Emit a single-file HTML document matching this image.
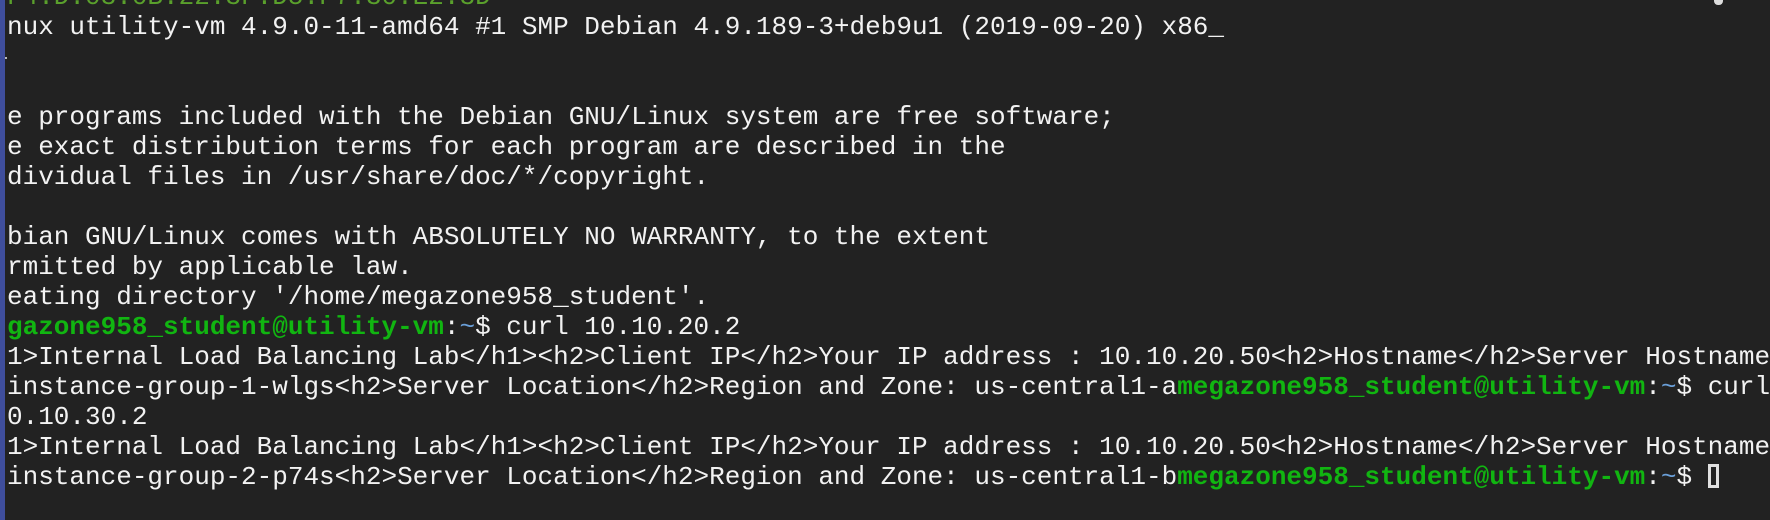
<!DOCTYPE html>
<html><head><meta charset="utf-8"><style>
html,body{margin:0;padding:0;width:1770px;height:520px;overflow:hidden;background:#222222;}
.bar{position:absolute;left:0;top:0;width:5px;height:520px;background:#3f4e9c;}
pre{position:absolute;left:7px;top:-18px;margin:0;font-family:"Liberation Mono",monospace;font-size:26px;line-height:30px;color:#f2f2f2;white-space:pre;}
.g{color:#11b511;font-weight:bold;}
.lg{color:#5aa02c;}
.b{color:#6a9fd8;}
.cur{display:inline-block;width:11px;height:24px;border:3px solid #e0e0e0;box-sizing:border-box;vertical-align:-4px;}
.blob{position:absolute;left:1714px;top:0;width:9px;height:5px;background:#ddd;border-radius:0 0 4px 4px;}
.dot{position:absolute;left:5px;top:57px;width:2px;height:2px;background:#bbb;}
</style></head><body>
<div class="bar"></div>
<div class="blob"></div>
<div class="dot"></div>
<pre><span class="lg">F4:D:03:0B:22:3F:D5:F7:30:E2:3D</span>
nux utility-vm 4.9.0-11-amd64 #1 SMP Debian 4.9.189-3+deb9u1 (2019-09-20) x86_


e programs included with the Debian GNU/Linux system are free software;
e exact distribution terms for each program are described in the
dividual files in /usr/share/doc/*/copyright.

bian GNU/Linux comes with ABSOLUTELY NO WARRANTY, to the extent
rmitted by applicable law.
eating directory '/home/megazone958_student'.
<span class="g">gazone958_student@utility-vm</span>:<span class="b">~</span>$ curl 10.10.20.2
1&gt;Internal Load Balancing Lab&lt;/h1&gt;&lt;h2&gt;Client IP&lt;/h2&gt;Your IP address : 10.10.20.50&lt;h2&gt;Hostname&lt;/h2&gt;Server Hostname
instance-group-1-wlgs&lt;h2&gt;Server Location&lt;/h2&gt;Region and Zone: us-central1-a<span class="g">megazone958_student@utility-vm</span>:<span class="b">~</span>$ curl
0.10.30.2
1&gt;Internal Load Balancing Lab&lt;/h1&gt;&lt;h2&gt;Client IP&lt;/h2&gt;Your IP address : 10.10.20.50&lt;h2&gt;Hostname&lt;/h2&gt;Server Hostname
instance-group-2-p74s&lt;h2&gt;Server Location&lt;/h2&gt;Region and Zone: us-central1-b<span class="g">megazone958_student@utility-vm</span>:<span class="b">~</span>$ <span class="cur"></span></pre>
</body></html>
